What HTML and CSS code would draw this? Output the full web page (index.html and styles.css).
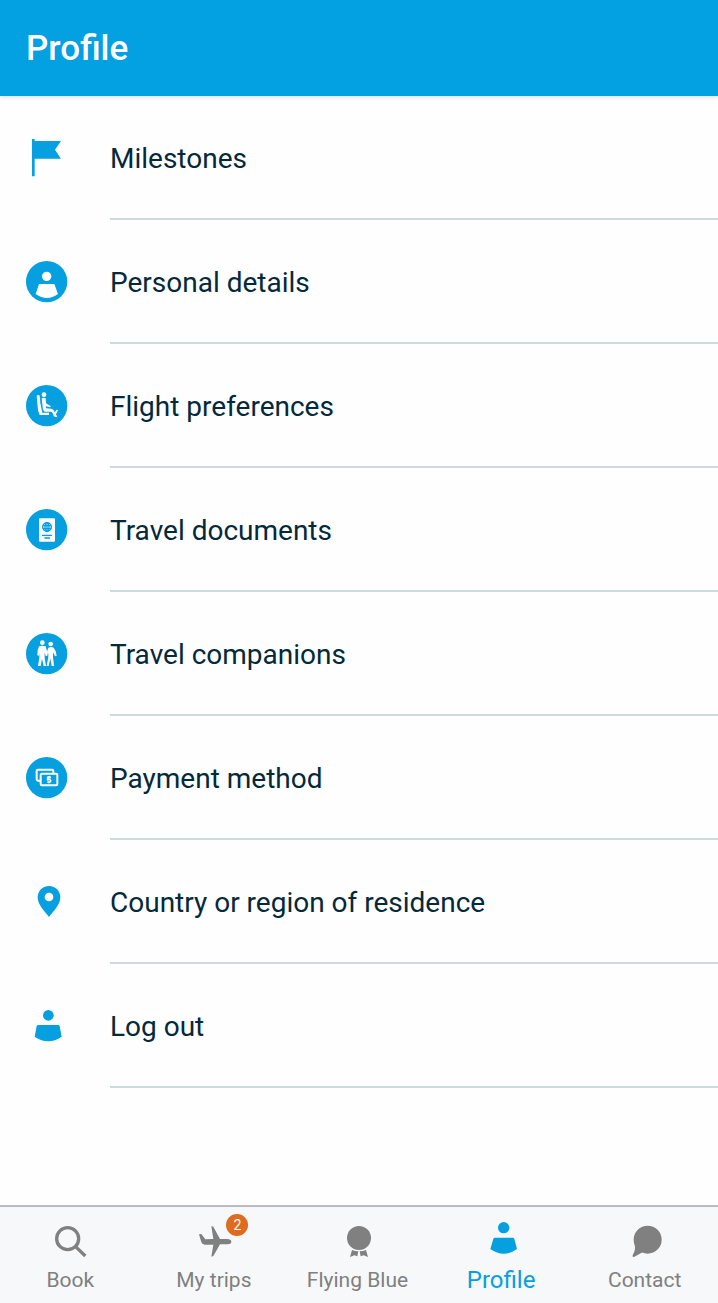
FILE: index.html
```html
<!DOCTYPE html>
<html lang="en">
 <head>
   <meta charset="utf-8">
   <meta name="viewport" content="width=device-width, initial-scale=1">
   <title>Profile</title>
   <link rel="stylesheet" href="styles.css">
 </head>
 <body>
   <header class="top-bar">
     <h1 class="title">Profile</h1>
   </header>

   <main class="content">
     <ul class="menu">
       <li>
         <a class="menu-item" href="#milestones">
           <svg class="menu-icon" viewBox="0 0 192 192" aria-hidden="true">
             <path d="M48 39h8v6h79l-18 26 18 27H56v53h-8z"/>
           </svg>
           <span class="menu-label">Milestones</span>
         </a>
       </li>
       <li>
         <a class="menu-item" href="#details">
           <svg class="menu-icon" viewBox="0 0 192 192" aria-hidden="true">
             <circle cx="92" cy="95" r="62"/>
             <g class="cut">
               <circle cx="92" cy="79" r="14"/>
               <path d="M69 102h46l11 30q-33 24-67 0z"/>
             </g>
           </svg>
           <span class="menu-label">Personal details</span>
         </a>
       </li>
       <li>
         <a class="menu-item" href="#preferences">
           <svg class="menu-icon" viewBox="0 0 192 192" aria-hidden="true">
             <circle cx="92" cy="95" r="62"/>
             <g class="cut">
               <circle cx="84" cy="62" r="7"/>
               <path d="M62 65q5-4 9 0l2 22 6 29h20v7H71l-5-14z"/>
               <path d="M77 73q7-4 12 0l1 15 14 8-1 4-14-3 1 6 16 1 6 3 12 21-7 1-10-16H86l-5-6z"/>
               <path d="M121 107l5 2-10 19-4-3z"/>
             </g>
           </svg>
           <span class="menu-label">Flight preferences</span>
         </a>
       </li>
       <li>
         <a class="menu-item" href="#documents">
           <svg class="menu-icon" viewBox="0 0 192 192" aria-hidden="true">
             <circle cx="92" cy="95" r="62"/>
             <rect class="cut" x="69" y="61" width="48" height="70" rx="3"/>
             <g class="line">
               <circle cx="93" cy="87" r="13"/>
               <ellipse cx="93" cy="87" rx="6" ry="13"/>
               <path d="M93 74v26M81 83h24M81 92h24"/>
               <path d="M78 112h30M85 120h17"/>
             </g>
           </svg>
           <span class="menu-label">Travel documents</span>
         </a>
       </li>
       <li>
         <a class="menu-item" href="#companions">
           <svg class="menu-icon" viewBox="0 0 192 192" aria-hidden="true">
             <circle cx="92" cy="95" r="62"/>
             <g class="cut">
               <circle cx="79" cy="62" r="7"/>
               <path d="M69 73q10-4 20 0l4 14 1 14-5 1-3-11v17l4 24h-7l-5-22-4 22h-8l4-25V91l-1 10-5-1 1-15z"/>
               <circle cx="104" cy="66" r="7"/>
               <path d="M97 77q8-4 16 0l6 11 3 13-5 2-6-12v14l3 27h-7l-4-23-5 23h-6l5-27V93l-2 8-2-12z"/>
             </g>
           </svg>
           <span class="menu-label">Travel companions</span>
         </a>
       </li>
       <li>
         <a class="menu-item" href="#payment">
           <svg class="menu-icon" viewBox="0 0 192 192" aria-hidden="true">
             <circle cx="92" cy="95" r="62"/>
             <g class="card">
               <path d="M72 104h-6q-4 0-4-4V75q0-4 4-4h42q4 0 4 4v5"/>
               <rect x="74" y="83" width="50" height="35" rx="4"/>
               <path class="thin" d="M105 94H95v7q8-3 9 3 0 6-10 4M99 90v4M99 108v4"/>
             </g>
           </svg>
           <span class="menu-label">Payment method</span>
         </a>
       </li>
       <li>
         <a class="menu-item" href="#country">
           <svg class="menu-icon" viewBox="0 0 192 192" aria-hidden="true">
             <path d="M99 48c-20 0-34 15-34 34 0 23 21 42 34 59 13-17 34-36 34-59 0-19-14-34-34-34z"/>
             <circle class="cut" cx="99" cy="81" r="13"/>
           </svg>
           <span class="menu-label">Country or region of residence</span>
         </a>
       </li>
       <li>
         <a class="menu-item" href="#logout">
           <svg class="menu-icon" viewBox="0 0 192 192" aria-hidden="true">
             <circle cx="97" cy="64" r="16"/>
             <path d="M67 93h60q3 0 4 4l6 31q-40 27-81 0l6-31q1-4 5-4z"/>
           </svg>
           <span class="menu-label">Log out</span>
         </a>
       </li>
     </ul>
   </main>

   <nav class="tabs">
     <a class="tab" href="#book">
       <svg class="tab-icon" viewBox="0 0 144 144" aria-hidden="true">
         <g class="glass">
           <circle cx="59" cy="65" r="33"/>
           <path d="M82 88l30 29"/>
         </g>
       </svg>
       <span class="tab-label">Book</span>
     </a>
     <a class="tab" href="#trips">
       <span class="icon-wrap">
         <svg class="tab-icon" viewBox="0 0 144 144" aria-hidden="true">
           <path d="M61 27l6 2 20 37h24q10 2 10 8t-10 8H87l-20 35-6 2 6-36H42q-8 0-11-7l-7-24 7-1 12 16 24-1z"/>
         </svg>
         <span class="badge">2</span>
       </span>
       <span class="tab-label">My trips</span>
     </a>
     <a class="tab" href="#flyingblue">
       <svg class="tab-icon" viewBox="0 0 144 144" aria-hidden="true">
         <circle cx="72" cy="63" r="36"/>
         <path d="M51 99q8 4 19 4l-3 15-9-3-13 5zM93 99q-8 4-19 4l3 15 9-3 13 5z"/>
       </svg>
       <span class="tab-label">Flying Blue</span>
     </a>
     <a class="tab tab-active" href="#profile" aria-current="page">
       <svg class="tab-icon" viewBox="0 0 144 144" aria-hidden="true">
         <circle cx="74" cy="32" r="17"/>
         <path d="M47 62h55q3 0 4 4l8 30q-40 29-80 0l9-30q1-4 4-4z"/>
       </svg>
       <span class="tab-label">Profile</span>
     </a>
     <a class="tab" href="#contact">
       <svg class="tab-icon" viewBox="0 0 144 144" aria-hidden="true">
         <circle cx="77" cy="68" r="42"/>
         <path d="M38 84q4 13-6 31-2 6 4 5l27-15z"/>
       </svg>
       <span class="tab-label">Contact</span>
     </a>
   </nav>
 </body>
</html>
```
FILE: styles.css
```css
* {
  box-sizing: border-box;
}
body {
  margin: 0;
  min-height: 100vh;
  display: flex;
  flex-direction: column;
  background-color: #fefefe;
  color: #04293b;
  font-family: Roboto, "Liberation Sans", sans-serif;
}
a {
  color: inherit;
  text-decoration: none;
}

/* header */
.top-bar {
  display: flex;
  align-items: center;
  height: 96px;
  padding: 0 26px;
  background-color: #03a0e2;
  box-shadow: 0 1px 4px rgba(0,0,0,0.15);
}
.title {
  margin: 0;
  color: white;
  font-size: 35px;
  font-weight: 500;
}

/* menu list */
.content {
  flex: 1;
}
.menu {
  margin: 0;
  padding: 0;
  list-style: none;
}
.menu-item {
  display: flex;
  align-items: center;
  gap: 30px;
  height: 124px;
  padding-left: 16px;
}
.menu-icon {
  flex: none;
  width: 64px;
  height: 64px;
  fill: #069fdf;
}
.menu-label {
  flex: 1;
  display: flex;
  align-items: center;
  height: 100%;
  padding-top: 2px;
  border-bottom: 2px solid #cbdae1;
  font-size: 28px;
}
.cut {
  fill: white;
}
.line {
  fill: none;
  stroke: #069fdf;
  stroke-width: 4;
}
.card {
  fill: none;
  stroke: white;
  stroke-width: 6;
}
.thin {
  stroke-width: 5;
}

/* bottom tabs */
.tabs {
  display: flex;
  height: 98px;
  border-top: 2px solid #b9bfc0;
  background-color: #f6f8fa;
}
.tab {
  flex: 1;
  display: flex;
  flex-direction: column;
  align-items: center;
  padding-top: 10px;
  color: #808080;
}
.tab-icon {
  display: block;
  width: 48px;
  height: 48px;
  fill: currentColor;
}
.glass {
  fill: none;
  stroke: currentColor;
  stroke-width: 10;
}
.tab-label {
  padding-right: 3px;
  font-size: 21px;
  line-height: 30px;
}
.tab-active {
  color: #069fdf;
}
.tab-active .tab-label {
  font-size: 24px;
}
.icon-wrap {
  position: relative;
}
.badge {
  position: absolute;
  top: -3px;
  right: -9px;
  width: 22px;
  height: 22px;
  border-radius: 50%;
  background-color: #df6b20;
  color: white;
  font-size: 14px;
  line-height: 23px;
  text-align: center;
}
```
